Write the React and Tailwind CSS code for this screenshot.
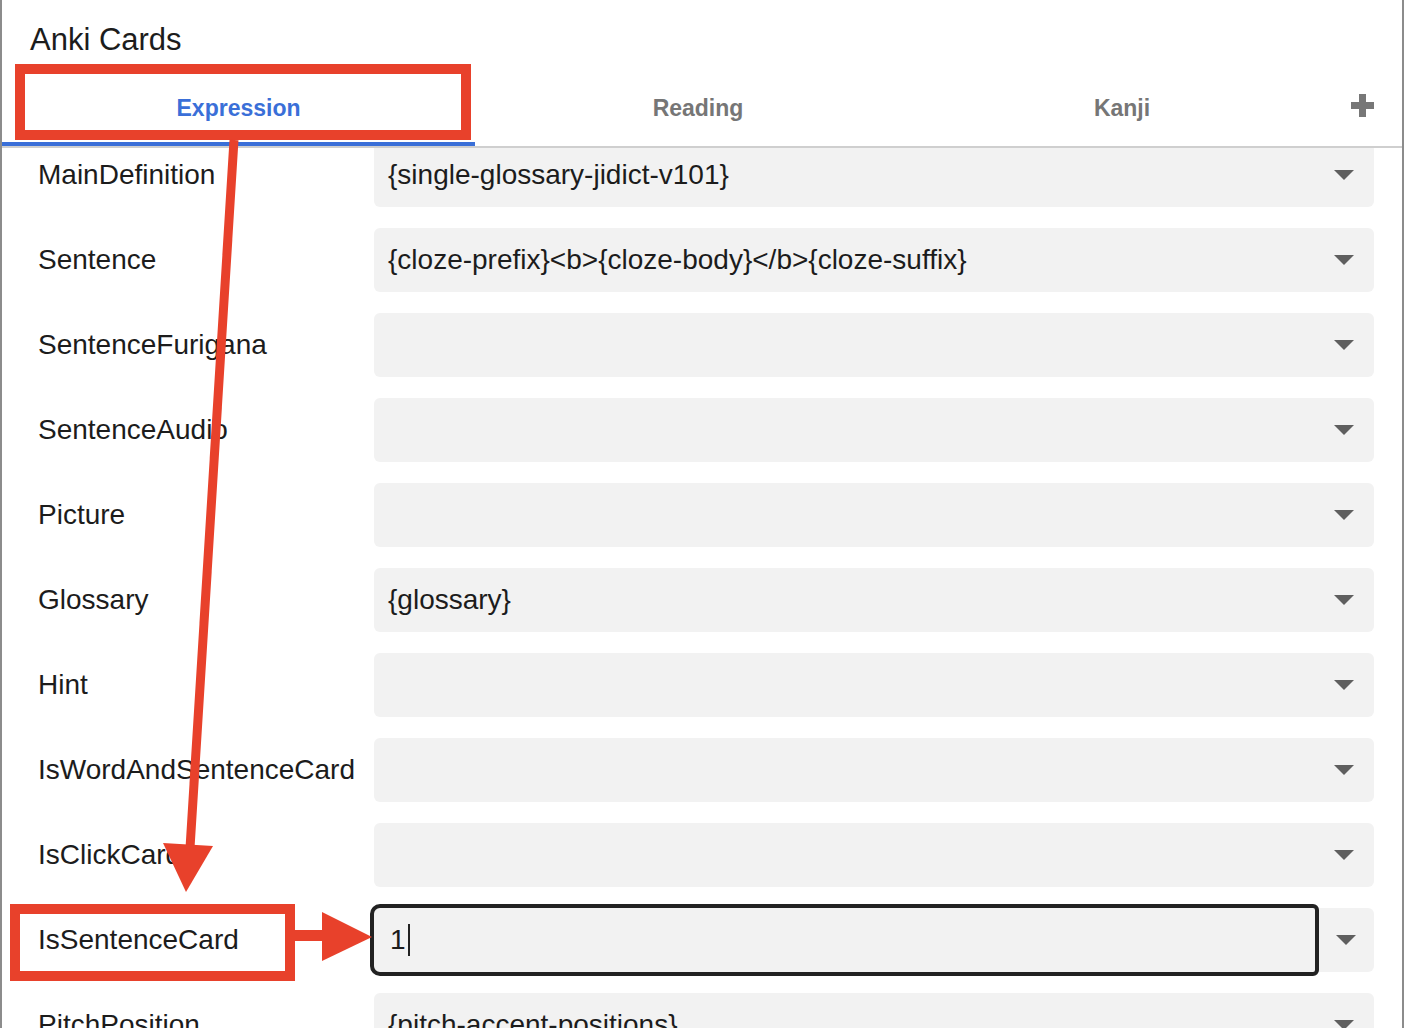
import { memo } from "react";

// Filas del editor de campos (nombre del campo + valor)
const campos = [
  { nombre: "MainDefinition", valor: "{single-glossary-jidict-v101}" },
  { nombre: "Sentence", valor: "{cloze-prefix}<b>{cloze-body}</b>{cloze-suffix}" },
  { nombre: "SentenceFurigana", valor: "" },
  { nombre: "SentenceAudio", valor: "" },
  { nombre: "Picture", valor: "" },
  { nombre: "Glossary", valor: "{glossary}" },
  { nombre: "Hint", valor: "" },
  { nombre: "IsWordAndSentenceCard", valor: "" },
  { nombre: "IsClickCard", valor: "" },
  { nombre: "IsSentenceCard", valor: "1", activo: true },
  { nombre: "PitchPosition", valor: "{pitch-accent-positions}" },
];

const Triangulo = () => (
  <svg width="20" height="10" viewBox="0 0 20 10" className="shrink-0">
    <polygon points="0,0 20,0 10,10" fill="#5f5f5f" />
  </svg>
);

const FilaCampo = memo(({ nombre, valor, activo }) => (
  <div className="flex h-[64px] items-center">
    <div className="w-[372px] shrink-0 whitespace-nowrap pl-[36px] text-[28px] leading-none text-[#1c1c1c]">{nombre}</div>
    {activo ? (
      <div className="flex h-[64px] w-[1000px] shrink-0">
        <div className="relative z-[1] flex h-[64px] w-[941px] items-center rounded-l-[6px] rounded-r-[2px] bg-[#f2f2f2] pl-[16px] text-[28px] text-[#1c1c1c] outline-[4px] outline-[#222]">
          {valor}
          <span className="ml-[2px] inline-block h-[32px] w-[2px] bg-[#222]" />
        </div>
        <div className="flex flex-1 items-center justify-center rounded-r-[6px] bg-[#f2f2f2] pl-[3px]">
          <Triangulo />
        </div>
      </div>
    ) : (
      <div className="flex h-[64px] w-[1000px] shrink-0 items-center justify-between rounded-[6px] bg-[#f2f2f2] pl-[14px] pr-[20px]">
        <span className="whitespace-nowrap text-[28px] leading-none text-[#1c1c1c]">{valor}</span>
        <Triangulo />
      </div>
    )}
  </div>
));

FilaCampo.displayName = "FilaCampo";

export default function App() {
  return (
    <div className="relative h-[1028px] w-[1404px] overflow-hidden bg-white font-['Liberation_Sans',Arial,sans-serif]">
      <div className="h-full border-x-2 border-[#8c8c8c]">
        <div className="h-[66px] pl-[28px] pt-[24px] text-[31px] leading-none text-[#1c1c1c]">Anki Cards</div>

        {/* Pestañas */}
        <div className="relative z-10 flex h-[82px] border-b-2 border-[#cfcfcf] bg-white">
          <div className="flex w-[473px] items-center justify-center border-b-4 border-[#3a6fd8] pt-[8px] text-[23px] font-bold text-[#3a6fd8]">
            Expression
          </div>
          <div className="flex w-[446px] items-center justify-center pt-[4px] text-[23px] font-bold text-[#767676]">
            Reading
          </div>
          <div className="flex w-[402px] items-center justify-center pt-[4px] text-[23px] font-bold text-[#767676]">
            Kanji
          </div>
          <div className="flex flex-1 items-center justify-center pb-[2px]">
            <svg width="23" height="23" viewBox="0 0 23 23">
              <rect x="8" y="0" width="7" height="23" fill="#777" />
              <rect x="0" y="8" width="23" height="7" fill="#777" />
            </svg>
          </div>
        </div>

        <div className="-mt-[5px] flex flex-col gap-[21px]">
          {campos.map((c) => (
            <FilaCampo key={c.nombre} {...c} />
          ))}
        </div>
      </div>

      {/* Anotaciones en rojo */}
      <svg className="pointer-events-none absolute left-0 top-0 z-20" width="1404" height="1028" viewBox="0 0 1404 1028">
        <rect x="20" y="69" width="446" height="66" fill="none" stroke="#e8412b" strokeWidth="10" />
        <rect x="15" y="909" width="275" height="67" fill="none" stroke="#e8412b" strokeWidth="10" />
        <line x1="234" y1="140" x2="190" y2="848" stroke="#e8412b" strokeWidth="9" />
        <polygon points="163,843 213,846 186,892" fill="#e8412b" />
        <rect x="295" y="930" width="30" height="11" fill="#e8412b" />
        <polygon points="322,912 322,961 372,937" fill="#e8412b" />
      </svg>
    </div>
  );
}
